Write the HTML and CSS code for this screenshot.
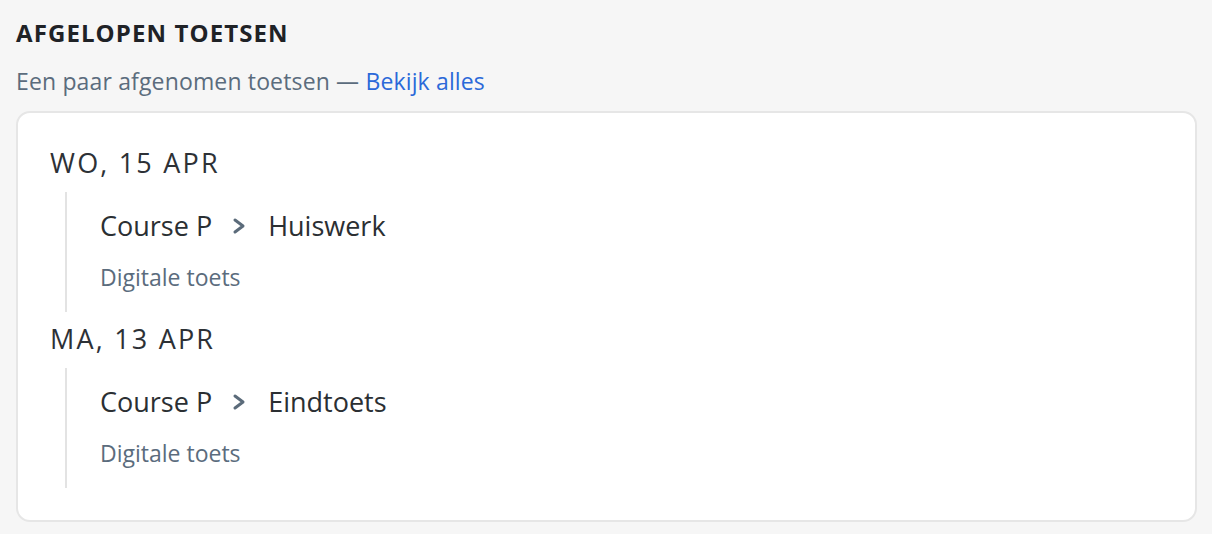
FILE: index.html
```html
<!DOCTYPE html>
<html lang="nl">
<head>
    <meta charset="UTF-8">
    <meta name="viewport" content="width=device-width, initial-scale=1.0">
    <title>Afgelopen toetsen</title>
    <link rel="stylesheet" href="styles.css">
</head>
<body>
    <section class="past-tests">
        <h2 class="section-title">Afgelopen toetsen</h2>
        <p class="section-sub">Een paar afgenomen toetsen — <a href="#" class="view-all">Bekijk alles</a></p>

        <div class="card">
            <div class="day">
                <div class="day-label">Wo, 15 apr</div>
                <ul class="test-list">
                    <li class="test">
                        <div class="crumbs">
                            <span>Course P</span>
                            <svg class="chevron" viewBox="0 0 14 18" width="14" height="18"><path d="M3 3 L11 9 L3 15" /></svg>
                            <span>Huiswerk</span>
                        </div>
                        <div class="test-type">Digitale toets</div>
                    </li>
                </ul>
            </div>
            <div class="day">
                <div class="day-label">Ma, 13 apr</div>
                <ul class="test-list">
                    <li class="test">
                        <div class="crumbs">
                            <span>Course P</span>
                            <svg class="chevron" viewBox="0 0 14 18" width="14" height="18"><path d="M3 3 L11 9 L3 15" /></svg>
                            <span>Eindtoets</span>
                        </div>
                        <div class="test-type">Digitale toets</div>
                    </li>
                </ul>
            </div>
        </div>
    </section>
</body>
</html>
```

FILE: styles.css
```css
body {
    font-family: 'Open Sans', 'Noto Sans', sans-serif;
    background: #f6f6f6;
    margin: 0;
    padding: 16px 15px 13px 16px;
    color: #2b2f33;
}
.section-title {
    margin: 0;
    font-size: 24px;
    line-height: 34px;
    font-weight: 700;
    letter-spacing: 1.1px;
    text-transform: uppercase;
    color: #1f2226;
}
.section-sub {
    margin: 17px 0 0;
    font-size: 23px;
    line-height: 28px;
    letter-spacing: 0.15px;
    color: #5b6c7d;
}
.view-all {
    color: #2b69d9;
    text-decoration: none;
}
.card {
    margin-top: 16px;
    background: white;
    border: 2px solid #e6e6e6;
    border-radius: 14px;
    padding: 32px 32px 23px;
}
.day {
    margin-bottom: 9px;
}
.day-label {
    font-size: 27px;
    line-height: 36px;
    letter-spacing: 2.2px;
    text-transform: uppercase;
    color: #2d3136;
    margin-bottom: 11px;
}
.test-list {
    list-style: none;
    margin: 0 0 0 15px;
    padding: 0;
    border-left: 2px solid #e3e3e3;
}
.test {
    padding: 16px 0 21px 33px;
}
.crumbs {
    display: flex;
    align-items: center;
    gap: 20px;
    font-size: 27px;
    line-height: 36px;
    color: #2b2f33;
}
.chevron {
    margin-right: 2px;
    fill: none;
    stroke: #5b6b7a;
    stroke-width: 3;
    stroke-linecap: round;
    stroke-linejoin: round;
}
.test-type {
    margin-top: 19px;
    font-size: 23px;
    line-height: 28px;
    color: #5b6c7d;
}
```
